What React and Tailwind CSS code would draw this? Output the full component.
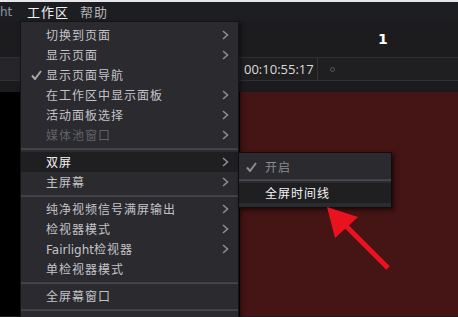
// App.jsx — DaVinci-style "工作区" dropdown with 双屏 submenu

const FONT = "font-['Noto_Sans_CJK_SC','Noto_Sans',sans-serif]";

// ─── Мелкие иконки ────────────────────────────────────────────────────────────
function Chevron() {
  return (
    <svg width="7" height="10" viewBox="0 0 7 10" className="shrink-0">
      <polyline points="1,1 5.5,5 1,9" fill="none" stroke="#8c8c90" strokeWidth="1.6" />
    </svg>
  );
}

function Check({ color = "#a8a8ac" }) {
  return (
    <svg width="11" height="10" viewBox="0 0 11 10">
      <polyline points="1,5.5 4,9 10,1" fill="none" stroke={color} strokeWidth="2" strokeLinejoin="miter" />
    </svg>
  );
}

// ─── Пункты меню ──────────────────────────────────────────────────────────────
function Item({ label, sub, check, active, disabled }) {
  const color = disabled ? "text-[#626266]" : active ? "text-[#f4f4f4]" : "text-[#c4c4c8]";
  return (
    <div className={`h-[20px] flex items-center pr-[9px] ${active ? "bg-[#1f1f22]" : ""}`}>
      <div className="w-[25px] flex justify-end pr-[4px]">{check && <Check />}</div>
      <span className={`flex-1 text-[12px] tracking-[1px] leading-none ${color}`}>{label}</span>
      {sub && <Chevron />}
    </div>
  );
}

function Sep() {
  return (
    <div className="h-[7px] flex items-center">
      <div className="h-[2px] w-full bg-[#3e3e44] border-b border-[#46464c]" />
    </div>
  );
}

export default function App() {
  return (
    <div className={`relative w-[458px] h-[317px] overflow-hidden bg-[#1c1c1f] ${FONT}`}>
      {/* top strip */}
      <div className="h-[2px] bg-[#e6e6e8]" />

      {/* menubar */}
      <div className="h-[19px] bg-[#1d1e22] flex items-center text-[13px] leading-none">
        <span className="w-[27px] text-[#8a96a4] font-['DejaVu_Sans',sans-serif] text-[12px]">ht</span>
        <span className="w-[53px] text-[#f2f2f2] tracking-[1px]">工作区</span>
        <span className="text-[#b4b4b8] tracking-[1px]">帮助</span>
      </div>

      {/* toolbar */}
      <div className="h-[36px] bg-[#1c1c1f] flex items-center">
        <span className="ml-[378px] text-[14px] font-bold text-white font-['DejaVu_Sans',sans-serif]">1</span>
      </div>

      {/* timecode row */}
      <div className="h-[24px] flex border-y border-[#2f2f34]">
        <div className="w-[240px] bg-[#26262a]" />
        <div className="w-[78px] bg-[#1f1f22] border-r border-[#303035] flex items-center pl-[4px] text-[13px] text-[#dcdcdc] font-['Open_Sans',sans-serif] leading-none">
          00:10:55:17
        </div>
        <div className="flex-1 bg-[#1f1f22] flex items-center pl-[12px]">
          <div className="w-[5px] h-[5px] rounded-full border border-[#56565c]" />
        </div>
      </div>

      {/* band */}
      <div className="h-[11px] bg-[#1b1b1e]" />

      {/* viewer */}
      <div className="flex h-[224px]">
        <div className="w-[240px] bg-black" />
        <div className="flex-1 bg-[#451414]" />
      </div>

      {/* dropdown */}
      <div className="absolute left-[20px] top-[21px] w-[219px] bg-[#2a2a2f] border border-[#141416] shadow-[2px_2px_4px_rgba(0,0,0,0.5)] pt-[3px]">
        <Item label="切换到页面" sub />
        <Item label="显示页面" sub />
        <Item label="显示页面导航" check />
        <Item label="在工作区中显示面板" sub />
        <Item label="活动面板选择" sub />
        <Item label="媒体池窗口" sub disabled />
        <Sep />
        <Item label="双屏" sub active />
        <Item label="主屏幕" sub />
        <Sep />
        <Item label="纯净视频信号满屏输出" sub />
        <Item label="检视器模式" sub />
        <div className="h-[20px] flex items-center pr-[9px]">
          <div className="w-[25px]" />
          <span className="flex-1 text-[12px] leading-none text-[#c4c4c8]">
            <span className="font-['DejaVu_Sans',sans-serif] text-[12px]">Fairlight</span>
            <span className="tracking-[1px]">检视器</span>
          </span>
          <Chevron />
        </div>
        <Item label="单检视器模式" />
        <Sep />
        <Item label="全屏幕窗口" />
        <Sep />
        <Item label="" />
      </div>

      {/* submenu */}
      <div className="absolute left-[238px] top-[152px] w-[154px] bg-[#2a2a2f] border border-[#0e0e10] shadow-[2px_2px_4px_rgba(0,0,0,0.6)] pt-[4px] pb-[4px]">
        <div className="h-[20px] flex items-center">
          <div className="w-[26px] flex justify-end pr-[8px]"><Check color="#8e8e92" /></div>
          <span className="text-[12px] tracking-[1px] leading-none text-[#8c8c90]">开启</span>
        </div>
        <div className="h-[6px] flex items-center">
          <div className="h-[2px] w-full bg-[#3e3e44] border-b border-[#48484e]" />
        </div>
        <div className="h-[20px] flex items-center bg-[#1f1f22]">
          <div className="w-[26px]" />
          <span className="text-[12px] tracking-[1px] leading-none text-[#f4f4f4]">全屏时间线</span>
        </div>
      </div>

      {/* red arrow */}
      <svg className="absolute left-0 top-0 pointer-events-none" width="458" height="317">
        <line x1="346" y1="226" x2="388" y2="268" stroke="#e8131f" strokeWidth="5" />
        <polygon points="327,207 335,238 358,217" fill="#e8131f" />
      </svg>
    </div>
  );
}
